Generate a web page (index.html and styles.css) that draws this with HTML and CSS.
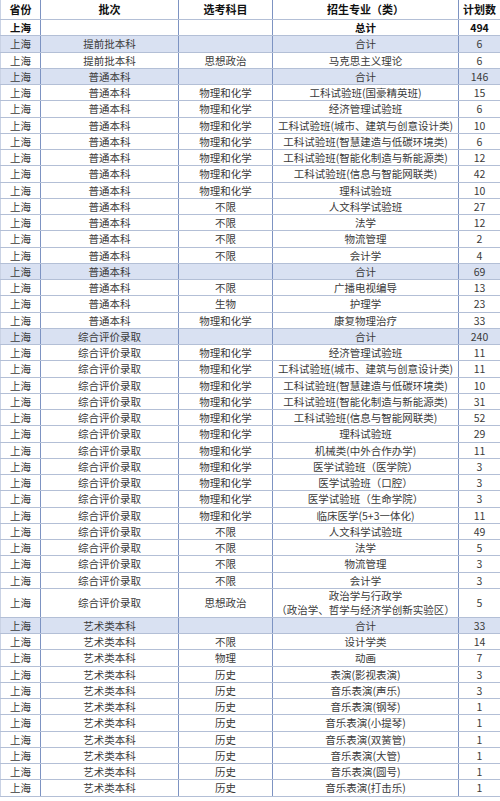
FILE: index.html
```html
<!DOCTYPE html>
<html lang="zh">
<head>
<meta charset="utf-8">
<link rel="stylesheet" href="styles.css">
</head>
<body>
<table class="plan">
<colgroup><col class="c1"><col class="c2"><col class="c3"><col class="c4"><col class="c5"></colgroup>
<thead>
<tr class="head"><th>省份</th><th>批次</th><th>选考科目</th><th>招生专业（类）</th><th>计划数</th></tr>
</thead>
<tbody>
<tr class="total"><td>上海</td><td></td><td></td><td>总计</td><td>494</td></tr>
<tr class="sub"><td>上海</td><td>提前批本科</td><td></td><td>合计</td><td>6</td></tr>
<tr><td>上海</td><td>提前批本科</td><td>思想政治</td><td>马克思主义理论</td><td>6</td></tr>
<tr class="sub"><td>上海</td><td>普通本科</td><td></td><td>合计</td><td>146</td></tr>
<tr><td>上海</td><td>普通本科</td><td>物理和化学</td><td>工科试验班(国豪精英班)</td><td>15</td></tr>
<tr><td>上海</td><td>普通本科</td><td>物理和化学</td><td>经济管理试验班</td><td>6</td></tr>
<tr><td>上海</td><td>普通本科</td><td>物理和化学</td><td>工科试验班(城市、建筑与创意设计类)</td><td>10</td></tr>
<tr><td>上海</td><td>普通本科</td><td>物理和化学</td><td>工科试验班(智慧建造与低碳环境类)</td><td>6</td></tr>
<tr><td>上海</td><td>普通本科</td><td>物理和化学</td><td>工科试验班(智能化制造与新能源类)</td><td>12</td></tr>
<tr><td>上海</td><td>普通本科</td><td>物理和化学</td><td>工科试验班(信息与智能网联类)</td><td>42</td></tr>
<tr><td>上海</td><td>普通本科</td><td>物理和化学</td><td>理科试验班</td><td>10</td></tr>
<tr><td>上海</td><td>普通本科</td><td>不限</td><td>人文科学试验班</td><td>27</td></tr>
<tr><td>上海</td><td>普通本科</td><td>不限</td><td>法学</td><td>12</td></tr>
<tr><td>上海</td><td>普通本科</td><td>不限</td><td>物流管理</td><td>2</td></tr>
<tr><td>上海</td><td>普通本科</td><td>不限</td><td>会计学</td><td>4</td></tr>
<tr class="sub"><td>上海</td><td>普通本科</td><td></td><td>合计</td><td>69</td></tr>
<tr><td>上海</td><td>普通本科</td><td>不限</td><td>广播电视编导</td><td>13</td></tr>
<tr><td>上海</td><td>普通本科</td><td>生物</td><td>护理学</td><td>23</td></tr>
<tr><td>上海</td><td>普通本科</td><td>物理和化学</td><td>康复物理治疗</td><td>33</td></tr>
<tr class="sub"><td>上海</td><td>综合评价录取</td><td></td><td>合计</td><td>240</td></tr>
<tr><td>上海</td><td>综合评价录取</td><td>物理和化学</td><td>经济管理试验班</td><td>11</td></tr>
<tr><td>上海</td><td>综合评价录取</td><td>物理和化学</td><td>工科试验班(城市、建筑与创意设计类)</td><td>11</td></tr>
<tr><td>上海</td><td>综合评价录取</td><td>物理和化学</td><td>工科试验班(智慧建造与低碳环境类)</td><td>10</td></tr>
<tr><td>上海</td><td>综合评价录取</td><td>物理和化学</td><td>工科试验班(智能化制造与新能源类)</td><td>31</td></tr>
<tr><td>上海</td><td>综合评价录取</td><td>物理和化学</td><td>工科试验班(信息与智能网联类)</td><td>52</td></tr>
<tr><td>上海</td><td>综合评价录取</td><td>物理和化学</td><td>理科试验班</td><td>29</td></tr>
<tr><td>上海</td><td>综合评价录取</td><td>物理和化学</td><td>机械类(中外合作办学)</td><td>11</td></tr>
<tr><td>上海</td><td>综合评价录取</td><td>物理和化学</td><td>医学试验班（医学院）</td><td>3</td></tr>
<tr><td>上海</td><td>综合评价录取</td><td>物理和化学</td><td>医学试验班（口腔）</td><td>3</td></tr>
<tr><td>上海</td><td>综合评价录取</td><td>物理和化学</td><td>医学试验班（生命学院）</td><td>3</td></tr>
<tr><td>上海</td><td>综合评价录取</td><td>物理和化学</td><td>临床医学(5+3一体化)</td><td>11</td></tr>
<tr><td>上海</td><td>综合评价录取</td><td>不限</td><td>人文科学试验班</td><td>49</td></tr>
<tr><td>上海</td><td>综合评价录取</td><td>不限</td><td>法学</td><td>5</td></tr>
<tr><td>上海</td><td>综合评价录取</td><td>不限</td><td>物流管理</td><td>3</td></tr>
<tr><td>上海</td><td>综合评价录取</td><td>不限</td><td>会计学</td><td>3</td></tr>
<tr class="double"><td>上海</td><td>综合评价录取</td><td>思想政治</td><td>政治学与行政学<br>（政治学、哲学与经济学创新实验区）</td><td>5</td></tr>
<tr class="sub"><td>上海</td><td>艺术类本科</td><td></td><td>合计</td><td>33</td></tr>
<tr><td>上海</td><td>艺术类本科</td><td>不限</td><td>设计学类</td><td>14</td></tr>
<tr><td>上海</td><td>艺术类本科</td><td>物理</td><td>动画</td><td>7</td></tr>
<tr><td>上海</td><td>艺术类本科</td><td>历史</td><td>表演(影视表演)</td><td>3</td></tr>
<tr><td>上海</td><td>艺术类本科</td><td>历史</td><td>音乐表演(声乐)</td><td>3</td></tr>
<tr><td>上海</td><td>艺术类本科</td><td>历史</td><td>音乐表演(钢琴)</td><td>1</td></tr>
<tr><td>上海</td><td>艺术类本科</td><td>历史</td><td>音乐表演(小提琴)</td><td>1</td></tr>
<tr><td>上海</td><td>艺术类本科</td><td>历史</td><td>音乐表演(双簧管)</td><td>1</td></tr>
<tr><td>上海</td><td>艺术类本科</td><td>历史</td><td>音乐表演(大管)</td><td>1</td></tr>
<tr><td>上海</td><td>艺术类本科</td><td>历史</td><td>音乐表演(圆号)</td><td>1</td></tr>
<tr><td>上海</td><td>艺术类本科</td><td>历史</td><td>音乐表演(打击乐)</td><td>1</td></tr>
</tbody>
</table>
</body>
</html>
```

FILE: styles.css
```css
html, body {
  margin: 0;
  padding: 0;
  background: #ffffff;
}

.plan {
  width: 500px;
  table-layout: fixed;
  border-collapse: collapse;
  font-family: "Noto Sans CJK SC", "Noto Sans", sans-serif;
  font-size: 10.5px;
  color: #3a3a3a;
}

.c1 { width: 40px; }
.c2 { width: 138px; }
.c3 { width: 94px; }
.c4 { width: 186px; }
.c5 { width: 42px; }

.plan th,
.plan td {
  padding: 0;
  text-align: center;
  vertical-align: middle;
  line-height: 13px;
  white-space: nowrap;
  overflow: hidden;
  border-left: 1px solid #7d93c2;
  border-bottom: 1px solid #b3bfd6;
}

.plan tr > :first-child {
  border-left: 1px solid #c9d2e4;
}

.plan tr > :last-child {
  border-right: 1px solid #c9d2e4;
}

.head th {
  height: 19px;
  font-size: 11px;
  font-weight: 700;
  color: #111111;
}

.plan tbody tr {
  height: 16.25px;
}

.plan tbody tr.double {
  height: 29px;
}

.double td {
  line-height: 14px;
}

.total td {
  font-weight: 700;
  color: #111111;
}

.sub td {
  background: #d9e1f2;
}
```
